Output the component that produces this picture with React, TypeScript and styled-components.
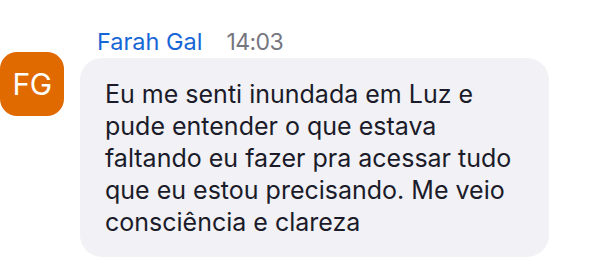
import styled, { createGlobalStyle } from "styled-components";

const GlobalStyle = createGlobalStyle`
  html, body {
    margin: 0;
    padding: 0;
    background: #ffffff;
  }
  body {
    font-family: Inter, "Noto Sans", sans-serif;
  }
`;

const Page = styled.div`
  width: 592px;
  height: 274px;
  overflow: hidden;
  box-sizing: border-box;
  padding-top: 26px;
`;

const MessageRow = styled.div`
  display: flex;
  align-items: flex-start;
  gap: 16px;
`;

const Avatar = styled.div<{ $color: string }>`
  flex-shrink: 0;
  width: 64px;
  height: 64px;
  margin-top: 26px;
  border-radius: 17px;
  background: ${(props) => props.$color};
  color: #ffffff;
  display: flex;
  align-items: center;
  justify-content: center;
  font-size: 30px;
  letter-spacing: -0.5px;
`;

const Content = styled.div`
  display: flex;
  flex-direction: column;
`;

const Header = styled.div`
  display: flex;
  align-items: baseline;
  gap: 24px;
  padding-left: 17px;
  height: 32px;
  line-height: 32px;
`;

const Name = styled.span`
  color: #1766d6;
  font-size: 23.5px;
`;

const Time = styled.span`
  color: #76767f;
  font-size: 23px;
  letter-spacing: -0.6px;
`;

const Bubble = styled.div`
  width: 469px;
  box-sizing: border-box;
  background: #f1f1f6;
  border-radius: 22px;
  padding: 20px 24px 19px 25px;
  color: #1b1b29;
  font-size: 25px;
  line-height: 32px;
`;

export default function App() {
  return (
    <Page>
      <GlobalStyle />
      <MessageRow>
        <Avatar $color="#e06a00">FG</Avatar>
        <Content>
          <Header>
            <Name>Farah Gal</Name>
            <Time>14:03</Time>
          </Header>
          <Bubble>
            Eu me senti inundada em Luz e
            <br />
            pude entender o que estava
            <br />
            faltando eu fazer pra acessar tudo
            <br />
            que eu estou precisando. Me veio
            <br />
            consciência e clareza
          </Bubble>
        </Content>
      </MessageRow>
    </Page>
  );
}
